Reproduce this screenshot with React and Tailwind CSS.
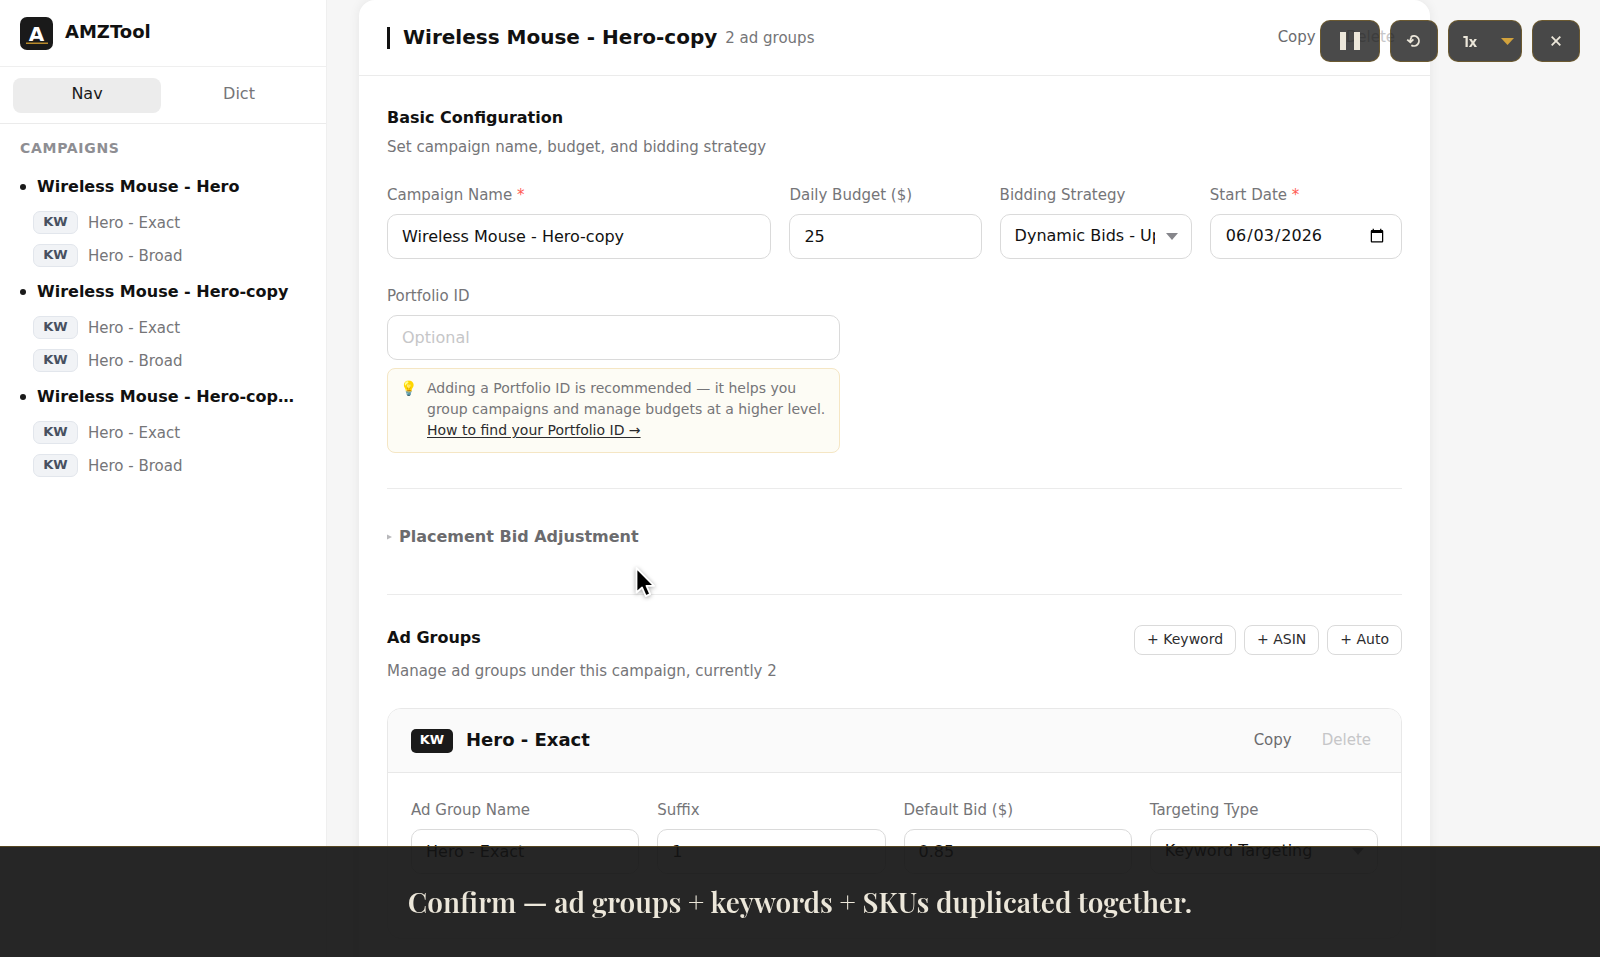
import React from "react";

const campaigns = [
  "Wireless Mouse - Hero",
  "Wireless Mouse - Hero-copy",
  "Wireless Mouse - Hero-cop…",
];
const groups = ["Hero - Exact", "Hero - Broad"];

const control =
  "h-[45px] w-full min-w-0 rounded-[10px] border border-[#dadada] bg-white px-[14px] text-base text-[#111] placeholder:text-[#c6c6c8] outline-none";

function Field({ id, label, required, children }) {
  return (
    <div className="flex min-w-0 flex-col gap-2">
      <label htmlFor={id} className="text-[15px] leading-[22px] text-[#757578]">
        {label}
        {required && <span className="text-[#ff5a52]"> *</span>}
      </label>
      {children}
    </div>
  );
}

function SelectBox({ id, children }) {
  return (
    <div className="relative">
      <select id={id} className={control + " appearance-none pr-9 pb-[2px]"}>
        {children}
      </select>
      <svg className="pointer-events-none absolute top-[19px] right-[14px]" width="12" height="7" viewBox="0 0 12 7" aria-hidden="true">
        <path d="M0 0h12L6 7z" fill="#86868b" />
      </svg>
    </div>
  );
}

function Sidebar() {
  return (
    <aside className="flex w-[327px] shrink-0 flex-col border-r border-[#efefef] bg-white">
      <div className="flex h-[67px] shrink-0 items-center gap-3 border-b border-[#efefef] px-5">
        <svg width="33" height="33" viewBox="0 0 33 33" aria-hidden="true">
          <rect width="33" height="33" rx="7" fill="#1a1a1a" />
          <text x="16.5" y="23.5" textAnchor="middle" fontSize="20" fontWeight="700" fill="#fff" fontFamily="DejaVu Sans">A</text>
          <rect x="6" y="25.5" width="22" height="1.5" fill="#b8892a" />
        </svg>
        <span className="pb-[2px] text-lg leading-6 font-bold text-[#111]">AMZTool</span>
      </div>
      <div className="flex h-[57px] shrink-0 items-center gap-1 border-b border-[#ebebeb] px-[13px]">
        <button className="h-[35px] flex-1 rounded-lg bg-[#ececec] pb-[2px] text-base text-[#1a1a1a]">Nav</button>
        <button className="h-[35px] flex-1 rounded-lg pb-[2px] text-base text-[#757578]">Dict</button>
      </div>
      <h2 className="px-5 pt-[14px] pb-[9px] text-sm leading-5 font-bold tracking-wider text-[#8e8e93]">CAMPAIGNS</h2>
      <nav>
        {campaigns.map((name) => (
          <div key={name}>
            <a href="#campaign" className="flex h-[39px] items-center gap-[11px] pr-4 pl-5">
              <span className="size-[6px] shrink-0 rounded-full bg-[#1a1a1a]" />
              <span className="text-base leading-6 font-bold text-[#111]">{name}</span>
            </a>
            {groups.map((g) => (
              <a href="#group" key={g} className="flex h-[33px] items-center gap-[10px] pl-[33px]">
                <span className="flex h-[23px] w-[45px] items-center justify-center rounded-[7px] border border-[#e2e6ec] bg-[#f1f3f6] pb-[2px] text-[13px] leading-4 font-bold text-[#475060]">KW</span>
                <span className="text-[15px] leading-5 text-[#757578]">{g}</span>
              </a>
            ))}
          </div>
        ))}
      </nav>
    </aside>
  );
}

function CardActions() {
  return (
    <div className="flex gap-4">
      <button className="px-[7px] text-[15px] text-[#6b6b6e]">Copy</button>
      <button className="px-[7px] text-[15px] text-[#c6c6c8]">Delete</button>
    </div>
  );
}

function AdGroup() {
  return (
    <section className="mt-[26px] overflow-hidden rounded-[14px] border border-[#e8e8e8]">
      <header className="flex h-16 items-center justify-between border-b border-[#e8e8e8] bg-[#fafafa] px-[23px]">
        <div className="flex items-center gap-[13px]">
          <span className="flex h-6 w-[42px] items-center justify-center rounded-[5px] bg-[#1a1a1a] pb-[2px] text-[13px] leading-4 font-bold text-white">KW</span>
          <h3 className="pb-[2px] text-lg leading-6 font-bold text-[#111]">Hero - Exact</h3>
        </div>
        <CardActions />
      </header>
      <div className="grid grid-cols-4 gap-[18px] px-[23px] pt-[26px] pb-16">
        <Field id="group-name" label="Ad Group Name">
          <input id="group-name" className={control} defaultValue="Hero - Exact" />
        </Field>
        <Field id="suffix" label="Suffix">
          <input id="suffix" className={control} defaultValue="1" />
        </Field>
        <Field id="bid" label="Default Bid ($)">
          <input id="bid" className={control} defaultValue="0.85" />
        </Field>
        <Field id="targeting" label="Targeting Type">
          <SelectBox id="targeting">
            <option>Keyword Targeting</option>
            <option>Auto Targeting</option>
          </SelectBox>
        </Field>
      </div>
    </section>
  );
}

function Editor() {
  return (
    <article className="w-full max-w-[1071px] self-start rounded-[16px] bg-white pb-20 shadow-[0_0_12px_rgba(0,0,0,0.07)]">
      <header className="flex h-[76px] items-center justify-between border-b border-[#ebebeb] px-7">
        <div className="flex items-center">
          <span className="mr-[13px] h-[22px] w-[3px] bg-[#111]" />
          <h1 className="mr-2 pb-[2px] text-xl leading-7 font-bold text-[#111]">Wireless Mouse - Hero-copy</h1>
          <span className="text-[15px] leading-5 text-[#757578]">2 ad groups</span>
        </div>
        <CardActions />
      </header>

      <div className="px-7 pt-[30px]">
        <h2 className="text-base leading-6 font-bold text-[#111]">Basic Configuration</h2>
        <p className="mt-[6px] text-[15px] leading-[22px] text-[#757578]">Set campaign name, budget, and bidding strategy</p>

        <div className="mt-[26px] grid grid-cols-[2fr_1fr_1fr_1fr] gap-[18px]">
          <Field id="name" label="Campaign Name" required>
            <input id="name" className={control} defaultValue="Wireless Mouse - Hero-copy" />
          </Field>
          <Field id="budget" label="Daily Budget ($)">
            <input id="budget" className={control} defaultValue="25" />
          </Field>
          <Field id="strategy" label="Bidding Strategy">
            <SelectBox id="strategy">
              <option>Dynamic Bids - Up and Down</option>
              <option>Dynamic Bids - Down Only</option>
            </SelectBox>
          </Field>
          <Field id="start" label="Start Date" required>
            <input id="start" type="date" className={control + " pb-[2px]"} defaultValue="2026-06-03" />
          </Field>
        </div>

        <div className="mt-[26px] flex max-w-[453px] flex-col gap-2">
          <Field id="portfolio" label="Portfolio ID">
            <input id="portfolio" className={control} placeholder="Optional" />
          </Field>
          <div className="flex gap-3 rounded-lg border border-[#f5e6c4] bg-[#fdfcf5] pt-[9px] pr-3 pb-[11px] pl-3 text-sm leading-[21px] text-[#757578]">
            <span className="w-[15px] shrink-0 font-['Noto_Color_Emoji','DejaVu_Sans',sans-serif]">💡</span>
            <p>
              Adding a Portfolio ID is recommended — it helps you group campaigns and manage budgets at a higher level.
              <br />
              <a href="#portfolio-help" className="text-[#2c2c2e] underline underline-offset-2">How to find your Portfolio ID →</a>
            </p>
          </div>
        </div>

        <hr className="mt-[35px] border-[#ebebeb]" />

        <button className="mt-9 flex h-6 items-center gap-[7px] text-base font-bold text-[#6b6b6e]">
          <svg width="5" height="6" viewBox="0 0 5 6" aria-hidden="true">
            <path d="M0 0.5L5 3L0 5.5z" fill="#b8b8bb" />
          </svg>
          Placement Bid Adjustment
        </button>

        <hr className="mt-[45px] border-[#ebebeb]" />

        <div className="mt-[30px] flex items-start justify-between">
          <div>
            <h2 className="pt-[1px] text-base leading-6 font-bold text-[#111]">Ad Groups</h2>
            <p className="mt-[10px] text-[15px] leading-[22px] text-[#757578]">Manage ad groups under this campaign, currently 2</p>
          </div>
          <div className="flex gap-2">
            {["+ Keyword", "+ ASIN", "+ Auto"].map((t) => (
              <button key={t} className="h-[30px] rounded-lg border border-[#dadada] bg-white px-3 pb-[2px] text-sm text-[#2c2c2e]">{t}</button>
            ))}
          </div>
        </div>

        <AdGroup />
      </div>
    </article>
  );
}

const playerButton =
  "flex h-[42px] items-center justify-center rounded-[10px] border border-[#7a6126]/70 bg-[#141414]/77 text-[#ece7da]";

function PlayerControls() {
  return (
    <div className="fixed top-5 right-5 z-20 flex gap-[10px]">
      <button aria-label="Pause" className={playerButton + " w-[60px]"}>
        <svg width="20" height="18" viewBox="0 0 20 18" aria-hidden="true">
          <path d="M0 0h6v18H0zM14 0h6v18h-6z" fill="#ece7da" />
        </svg>
      </button>
      <button aria-label="Restart" className={playerButton + " w-12"}>
        <svg width="16" height="14" viewBox="0 0 16 14" fill="none" stroke="#ece7da" strokeWidth="1.8" aria-hidden="true">
          <path d="M4.9 3A5 5 0 1 1 5.3 11.2" />
          <path d="M1.2 5.6l3.2 2.6 3-2.9M4.3 8C4.2 6 4.5 4.4 5.6 3" />
        </svg>
      </button>
      <div className="relative">
        <select aria-label="Speed" className={playerButton + " w-[74px] appearance-none pl-[14px] font-['Outfit','Lato',sans-serif] text-base font-semibold"}>
          <option>1x</option>
          <option>2x</option>
        </select>
        <svg className="pointer-events-none absolute top-[18px] right-2" width="13" height="7" viewBox="0 0 13 7" aria-hidden="true">
          <path d="M0 0h13L6.5 7z" fill="#d2a23c" />
        </svg>
      </div>
      <button aria-label="Close" className={playerButton + " w-12"}>
        <svg width="10" height="10" viewBox="0 0 10 10" stroke="#ece7da" strokeWidth="1.8" aria-hidden="true">
          <path d="M0.7 0.7l8.6 8.6M9.3 0.7L0.7 9.3" />
        </svg>
      </button>
    </div>
  );
}

export default function App() {
  return (
    <div className="flex h-screen overflow-hidden bg-[#f6f6f6] font-['DejaVu_Sans',sans-serif]">
      <Sidebar />
      <main className="flex min-w-0 flex-1 px-8">
        <Editor />
      </main>
      <PlayerControls />
      <svg className="absolute top-[565px] left-[633px] z-10 drop-shadow-[0_1px_2px_rgba(0,0,0,0.35)]" width="26" height="34" viewBox="0 0 26 34" aria-hidden="true">
        <path d="M3.5 3v24.5l5.6-5 3.7 8.6 4.4-1.9-3.7-8.4h7.6z" fill="#000" stroke="#fff" strokeWidth="1.8" strokeLinejoin="round" />
      </svg>
      <footer className="fixed inset-x-0 bottom-0 z-10 flex h-[111px] items-center justify-center border-t border-[#6b5420]/70 bg-[#141414]/92 px-8">
        <p className="text-center font-['Playfair_Display','Liberation_Serif',serif] text-[28px] leading-10 font-semibold text-[#ece7da]">
          Confirm — ad groups + keywords + SKUs duplicated together.
        </p>
      </footer>
    </div>
  );
}
